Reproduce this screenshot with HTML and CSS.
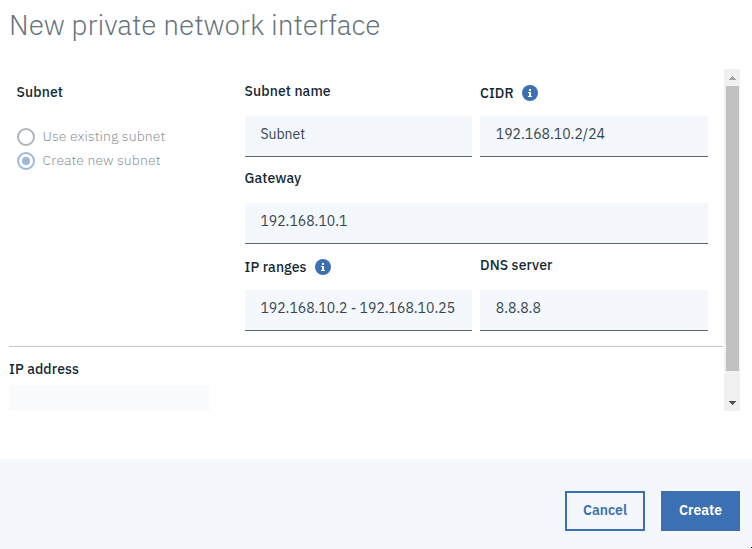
FILE: index.html
```html
<!DOCTYPE html>
<html lang="en">
<head>
<meta charset="utf-8">
<title>New private network interface</title>
<link rel="stylesheet" href="styles.css">
</head>
<body>
<main class="modal">
  <h1 class="title">New private network interface</h1>
  <div class="scroll-area">
    <div class="content">
      <section class="subnet">
        <div class="choices">
          <h2 class="label label-subnet">Subnet</h2>
          <div class="radio"><span class="dot"></span><span>Use existing subnet</span></div>
          <div class="radio checked"><span class="dot"></span><span>Create new subnet</span></div>
        </div>
        <div class="fields">
          <div class="field">
            <div class="label">Subnet name</div>
            <div class="input">Subnet</div>
          </div>
          <div class="field">
            <div class="label with-icon"><span>CIDR</span>
              <svg class="info" viewBox="0 0 16 16"><circle cx="8" cy="8" r="8"/><path d="M7 4h2v2H7zM6 7h3v4h1v1H6v-1h1V8H6z"/></svg>
            </div>
            <div class="input">192.168.10.2/24</div>
          </div>
          <div class="field wide">
            <div class="label">Gateway</div>
            <div class="input">192.168.10.1</div>
          </div>
          <div class="field">
            <div class="label with-icon"><span>IP ranges</span>
              <svg class="info" viewBox="0 0 16 16"><circle cx="8" cy="8" r="8"/><path d="M7 4h2v2H7zM6 7h3v4h1v1H6v-1h1V8H6z"/></svg>
            </div>
            <div class="input">192.168.10.2 - 192.168.10.25</div>
          </div>
          <div class="field">
            <div class="label">DNS server</div>
            <div class="input">8.8.8.8</div>
          </div>
        </div>
      </section>
      <section class="address">
        <div class="label">IP address</div>
        <div class="address-input"></div>
      </section>
    </div>
    <div class="scrollbar">
      <svg class="arrow" viewBox="0 0 16 17"><path class="up" d="M5 11h7v-1h-1V9h-1V8H9V7H8v1H7v1H6v1H5z"/></svg>
      <div class="thumb"></div>
      <svg class="arrow" viewBox="0 0 16 17"><path class="down" d="M5 7h7v1h-1v1h-1v1H9v1H8v-1H7V9H6V8H5z"/></svg>
    </div>
  </div>
  <footer class="footer">
    <button class="button cancel">Cancel</button>
    <button class="button create">Create</button>
    <i class="corner"></i>
  </footer>
</main>
</body>
</html>
```
FILE: styles.css
```css
* { box-sizing: border-box; }
body {
  margin: 0;
  background: #fff;
  color: #152934;
  font-family: "IBM Plex Sans", Roboto, sans-serif;
  font-size: 14px;
  line-height: 20px;
}
.modal { width: 752px; height: 549px; display: flex; flex-direction: column; }
.title {
  margin: 0;
  height: 69px;
  padding: 5px 0 0 9px;
  font-size: 28px;
  line-height: 40px;
  font-weight: 300;
  color: #66747d;
}
.scroll-area { height: 342px; margin: 0 12px 0 9px; display: flex; justify-content: space-between; }
.content { width: 714px; overflow: hidden; }
.subnet { height: 278px; display: flex; border-bottom: 1px solid #c7c7c7; }
.choices { width: 235.6px; padding: 13px 0 0 7.6px; flex: none; }
.label { margin: 0; font-size: 14px; line-height: 20px; font-weight: 500; letter-spacing: 0.1px; }
.label-subnet { margin-bottom: 22px; }
.radio { display: flex; align-items: center; gap: 8px; height: 24px; font-weight: 300; color: #8a949a; letter-spacing: 0.1px; }
.dot { width: 18px; height: 18px; margin-top: 1px; border: 2px solid #adb5ba; border-radius: 50%; display: flex; }
.checked .dot { border-color: #9eb8dd; }
.checked .dot::after { content: ""; width: 8px; height: 8px; margin: auto; border-radius: 50%; background: #9eb8dd; }
.fields { width: 463.4px; padding-top: 12px; display: grid; grid-template-columns: 227.4px 228px; grid-template-rows: 87px 87px 87px; column-gap: 8px; }
.field { display: flex; flex-direction: column; }
.field .label { height: 35px; }
.field .with-icon { display: flex; padding-top: 2px; gap: 8px; }
.wide { grid-column: 1 / -1; }
.info { width: 16px; height: 16px; margin-top: 2px; }
.info circle { fill: #3d70b2; }
.info path { fill: #fff; }
.input { height: 41px; padding: 8px 15.8px; background: #f4f7fb; border-bottom: 1px solid #5a6872; font-weight: 400; color: #344650; white-space: nowrap; }
.address { padding-top: 12px; }
.address-input { width: 201px; height: 32px; margin-top: 6px; background: #fafbfd; }
.scrollbar { width: 16px; background: #f1f1f1; display: flex; flex-direction: column; }
.arrow { width: 16px; height: 17px; flex: none; shape-rendering: crispEdges; }
.up { fill: #a3a3a3; }
.down { fill: #505050; }
.thumb { width: 13px; height: 285px; margin: 0 0 23px 2px; background: #c1c1c1; }
.footer { position: relative; height: 90px; margin-top: 48px; padding: 32px 12px 0 0; display: flex; justify-content: flex-end; gap: 16px; background: #f4f7fb; }
.button { height: 40px; padding: 0 0 2px; border: 2px solid #3d70b2; font-family: inherit; font-size: 14px; line-height: 20px; font-weight: 600; }
.cancel { width: 80px; color: #3d70b2; background: transparent; }
.create { width: 79px; color: #fff; background: #3d70b2; }
.corner { position: absolute; right: 0; bottom: 1px; width: 1px; height: 1px; background: #000; }
```
